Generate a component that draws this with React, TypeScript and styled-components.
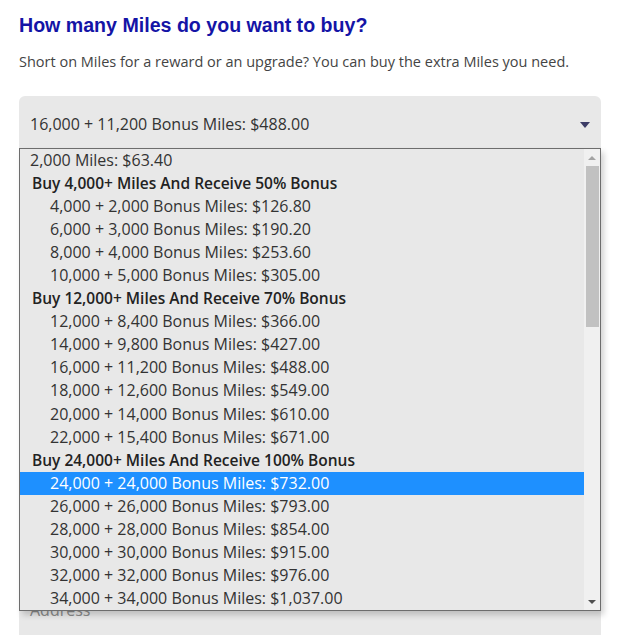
import React from "react";
import styled, { createGlobalStyle } from "styled-components";

const Global = createGlobalStyle`
  html, body { margin: 0; padding: 0; background: #ffffff; }
  body { font-family: "Open Sans", "Liberation Sans", sans-serif; }
  * { box-sizing: border-box; }
`;

const Page = styled.div`
  width: 622px;
  height: 635px;
  overflow: hidden;
  padding: 13px 21px 0 19px;
  display: flex;
  flex-direction: column;
`;

const Heading = styled.h2`
  margin: 0;
  font-family: "Liberation Sans", Arial, sans-serif;
  font-weight: 700;
  font-size: 19.6px;
  line-height: 24px;
  color: #1414a6;
`;

const Intro = styled.p`
  margin: 14px 0 0;
  font-size: 14.5px;
  line-height: 22px;
  color: #444444;
`;

const SelectWrap = styled.div`
  position: relative;
  margin-top: 23px;
`;

const SelectBox = styled.div`
  height: 54px;
  background: #e8e8e8;
  border-radius: 6px 6px 0 0;
  border-bottom: 2px solid #5a5a5a;
  display: flex;
  align-items: center;
  justify-content: space-between;
  padding: 4px 11px 0 11px;
  font-size: 16px;
  color: #333333;
`;

const Caret = styled.span`
  width: 0;
  height: 0;
  border-left: 5px solid transparent;
  border-right: 5px solid transparent;
  border-top: 6px solid #3c3c66;
  margin-top: 2px;
`;

const Dropdown = styled.div`
  position: absolute;
  top: 52px;
  left: 0;
  width: 582px;
  height: 463px;
  border: 1px solid #6d6d6d;
  background: #e8e8e8;
  box-shadow: 3px 4px 6px rgba(0, 0, 0, 0.18);
  display: flex;
  z-index: 5;
`;

const OptionList = styled.ul`
  list-style: none;
  margin: 0;
  padding: 0;
  flex: 1;
  overflow: hidden;
`;

const Row = styled.li<{ $kind: "option" | "group" | "sub"; $active?: boolean }>`
  height: 23.05px;
  line-height: 23px;
  font-size: ${(p) => (p.$kind === "group" ? "15.5px" : "16px")};
  white-space: nowrap;
  padding-left: ${(p) => (p.$kind === "sub" ? "30px" : p.$kind === "group" ? "12px" : "10px")};
  font-weight: ${(p) => (p.$kind === "group" ? 600 : 400)};
  color: ${(p) => (p.$active ? "#ffffff" : p.$kind === "group" ? "#222222" : "#333333")};
  background: ${(p) => (p.$active ? "#1e90ff" : "transparent")};
`;

const Scrollbar = styled.div`
  width: 16px;
  background: #f0f0f0;
  display: flex;
  flex-direction: column;
  align-items: center;
`;

const ArrowBtn = styled.div<{ $down?: boolean }>`
  height: 17px;
  width: 100%;
  display: flex;
  align-items: center;
  justify-content: center;
  &::after {
    content: "";
    width: 0;
    height: 0;
    border-left: 4px solid transparent;
    border-right: 4px solid transparent;
    ${(p) =>
      p.$down
        ? "border-top: 4px solid #505050;"
        : "border-bottom: 4px solid #a3a3a3;"}
  }
`;

const Track = styled.div`
  flex: 1;
  width: 100%;
  display: flex;
  justify-content: center;
`;

const Thumb = styled.div`
  width: 13px;
  height: 161px;
  background: #c1c1c1;
`;

const AddressField = styled.div`
  margin-top: 446px;
  height: 60px;
  background: #e8e8e8;
  border-radius: 6px 6px 0 0;
  padding: 3px 11px 0;
`;

const AddressLabel = styled.span`
  font-size: 16px;
  line-height: 22px;
  color: #8a8a8a;
`;

type Item = { text: string; kind: "option" | "group" | "sub"; active?: boolean };

const items: Item[] = [
  { text: "2,000 Miles: $63.40", kind: "option" },
  { text: "Buy 4,000+ Miles And Receive 50% Bonus", kind: "group" },
  { text: "4,000 + 2,000 Bonus Miles: $126.80", kind: "sub" },
  { text: "6,000 + 3,000 Bonus Miles: $190.20", kind: "sub" },
  { text: "8,000 + 4,000 Bonus Miles: $253.60", kind: "sub" },
  { text: "10,000 + 5,000 Bonus Miles: $305.00", kind: "sub" },
  { text: "Buy 12,000+ Miles And Receive 70% Bonus", kind: "group" },
  { text: "12,000 + 8,400 Bonus Miles: $366.00", kind: "sub" },
  { text: "14,000 + 9,800 Bonus Miles: $427.00", kind: "sub" },
  { text: "16,000 + 11,200 Bonus Miles: $488.00", kind: "sub" },
  { text: "18,000 + 12,600 Bonus Miles: $549.00", kind: "sub" },
  { text: "20,000 + 14,000 Bonus Miles: $610.00", kind: "sub" },
  { text: "22,000 + 15,400 Bonus Miles: $671.00", kind: "sub" },
  { text: "Buy 24,000+ Miles And Receive 100% Bonus", kind: "group" },
  { text: "24,000 + 24,000 Bonus Miles: $732.00", kind: "sub", active: true },
  { text: "26,000 + 26,000 Bonus Miles: $793.00", kind: "sub" },
  { text: "28,000 + 28,000 Bonus Miles: $854.00", kind: "sub" },
  { text: "30,000 + 30,000 Bonus Miles: $915.00", kind: "sub" },
  { text: "32,000 + 32,000 Bonus Miles: $976.00", kind: "sub" },
  { text: "34,000 + 34,000 Bonus Miles: $1,037.00", kind: "sub" },
];

export default function App() {
  return (
    <>
      <Global />
      <Page>
        <Heading>How many Miles do you want to buy?</Heading>
        <Intro>Short on Miles for a reward or an upgrade? You can buy the extra Miles you need.</Intro>
        <SelectWrap>
          <SelectBox>
            <span>16,000 + 11,200 Bonus Miles: $488.00</span>
            <Caret />
          </SelectBox>
          <Dropdown>
            <OptionList>
              {items.map((it) => (
                <Row key={it.text} $kind={it.kind} $active={it.active}>
                  {it.text}
                </Row>
              ))}
            </OptionList>
            <Scrollbar>
              <ArrowBtn />
              <Track>
                <Thumb />
              </Track>
              <ArrowBtn $down />
            </Scrollbar>
          </Dropdown>
        </SelectWrap>
        <AddressField>
          <AddressLabel>Address</AddressLabel>
        </AddressField>
      </Page>
    </>
  );
}
